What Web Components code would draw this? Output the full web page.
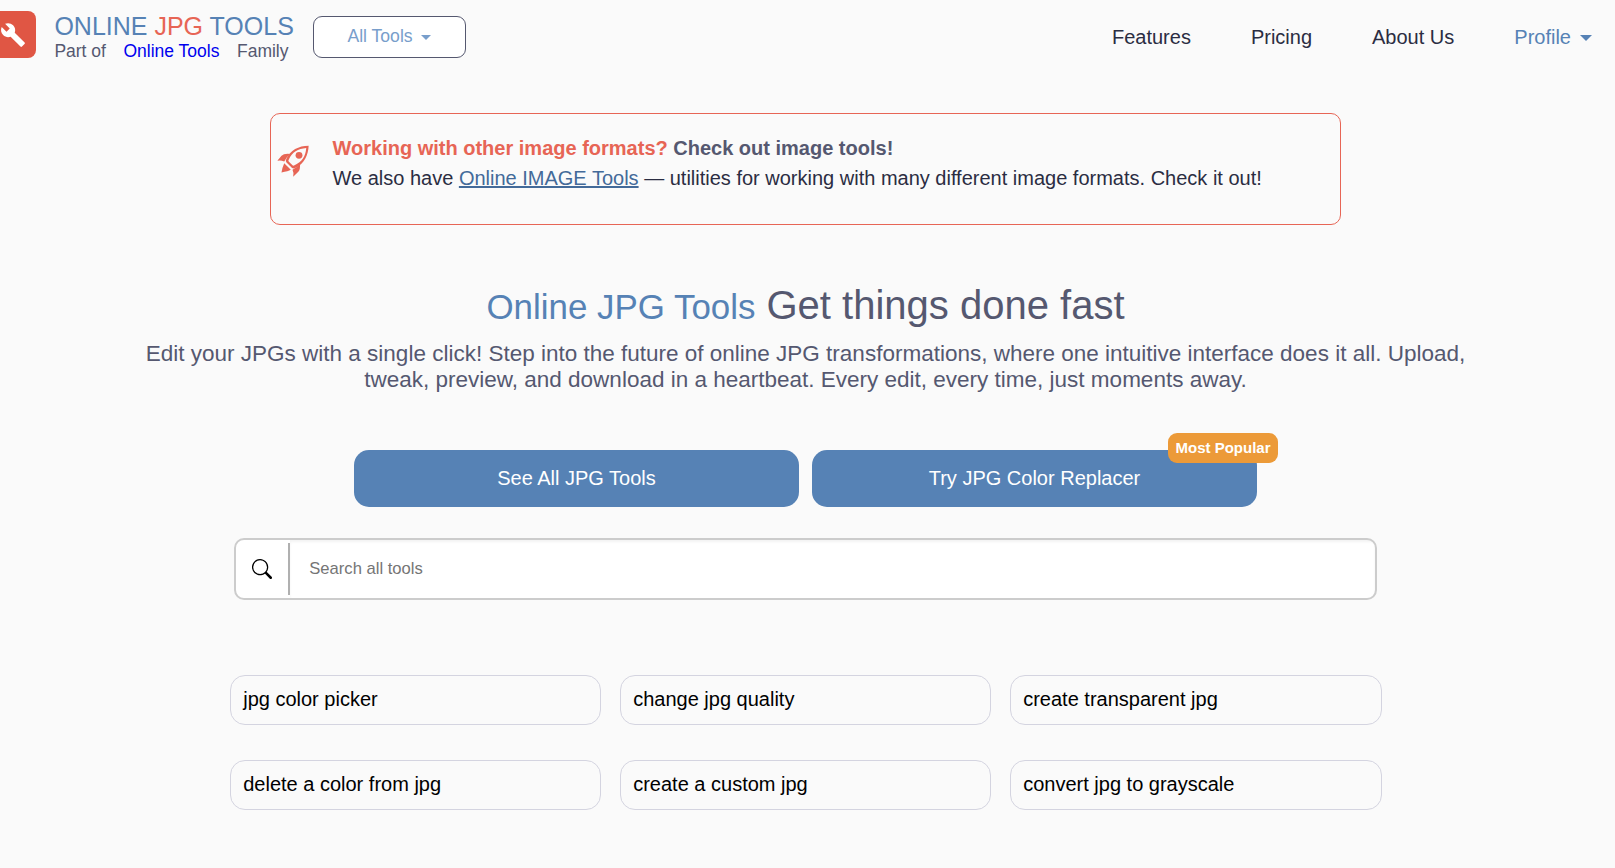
<!DOCTYPE html>
<html lang="en">
<head>
<meta charset="utf-8">
<title>Online JPG Tools</title>
<style>
html,body{margin:0;height:100%;background:#fafafa}
body{font-family:"Liberation Sans",Arial,sans-serif;font-size:20px;line-height:24px;color:#2b2d42;overflow:hidden}
</style>
</head>
<body>
<jpg-page></jpg-page>
<script>
function define(name, html) {
  const t = document.createElement('template');
  t.innerHTML = html;
  customElements.define(name, class extends HTMLElement {
    constructor() {
      super();
      this.attachShadow({mode: 'open'}).appendChild(t.content.cloneNode(true));
    }
  });
}

define('caret-down', `<style>
:host{display:block;width:0;height:0;border:6px solid transparent;border-top-color:currentColor;border-bottom:0}
:host([small]){border-width:5px 5px 0}
</style>`);

define('site-logo', `<style>
:host{display:flex;height:47px}
.mark{width:36px;height:47px;background:#e05644;border-radius:0 8px 8px 0;flex:none;display:flex;align-items:center}
svg{display:block;width:26px;height:26px;fill:#fff}
.words{margin-left:18.4px;padding-top:1px}
.name{font-size:25px;line-height:28px;color:#5682b5;white-space:nowrap}
.name b{font-weight:400;color:#e76555}
.fam{font-size:17.5px;line-height:23px;color:#555870;display:flex;gap:17.5px;white-space:nowrap}
a{color:#00e;text-decoration:none}
</style>
<div class="mark"><svg viewBox="0 0 24 24"><path d="M22.7 19l-9.1-9.1c.9-2.3.4-5-1.5-6.9-2-2-5-2.4-7.4-1.3L9 6 6 9 1.6 4.7C.4 7.1.9 10.1 2.9 12.1c1.9 1.9 4.6 2.4 6.9 1.5l9.1 9.1c.4.4 1 .4 1.4 0l2.3-2.3c.5-.4.5-1.1.1-1.4z"/></svg></div>
<div class="words"><div class="name">ONLINE <b>JPG</b> TOOLS</div>
<div class="fam"><span>Part of</span><a>Online Tools</a><span>Family</span></div></div>`);

define('all-tools', `<style>
:host{display:flex;box-sizing:border-box;width:153px;height:42px;border:1px solid #55586f;border-radius:9px;background:#fff;color:#789ecb;font-size:17.6px;line-height:38px;padding-left:33.4px;gap:8.6px;white-space:nowrap}
caret-down{margin-top:18px}
</style><span><slot></slot></span><caret-down small></caret-down>`);

define('top-bar', `<style>
:host{display:flex;height:70px;padding-top:11px;box-sizing:border-box;padding-right:23px}
all-tools{margin:5px 0 0 20px}
nav{margin-left:auto;display:flex;gap:60px;line-height:24px;padding-top:14px}
.profile{display:flex;gap:9px;color:#5682b5}
caret-down{margin-top:10px}
site-logo{width:293px}
</style>
<site-logo></site-logo><all-tools>All Tools</all-tools>
<nav><span>Features</span><span>Pricing</span><span>About Us</span><span class="profile">Profile<caret-down></caret-down></span></nav>`);

define('promo-banner', `<style>
:host{display:flex;box-sizing:border-box;width:1071px;height:112px;border:1px solid #e76555;border-radius:10px;padding:19px 0 0 6.5px;line-height:30px;white-space:nowrap}
svg{width:32px;height:33px;margin:12px 23.5px 0 -.5px;flex:none}
b{color:#555870}b i{font-style:normal;color:#e76555}
a{color:#436a99;text-decoration:underline}
</style>
<svg viewBox="53 136 93 96" fill="#e76555"><path fill-rule="evenodd" d="M145 138C144 165 132 190 107 202Q101 206 96 202L80 186Q77 182 80 177C91 151 116 138 145 138ZM138 145C114 147 97 157 87 179Q85 182 87 184L98 195Q100 197 104 195C126 185 136 169 138 145Z"/><circle cx="117" cy="166" r="10"/><path d="M92 162Q73 160 66 167L54 182Q63 179 74 184Q80 170 92 162ZM120 189Q121 208 115 214L100 228Q103 218 98 208Q111 202 120 189ZM74 189L93 208Q86 212 66 216Q68 202 74 189Z"/></svg>
<div><b><i>Working with other image formats?</i> Check out image tools!</b><br>We also have <a>Online IMAGE Tools</a> — utilities for working with many different image formats. Check it out!</div>`);

define('hero-text', `<style>
:host{display:block;text-align:center;color:#555870}
h1{margin:0;font-weight:400;font-size:40px;line-height:48px}
h1 span{font-size:34.9px;color:#5682b5}
p{margin:10px 0 0;font-size:22.5px;line-height:26px;white-space:nowrap}
</style>
<h1><span>Online JPG Tools</span> Get things done fast</h1>
<p>Edit your JPGs with a single click! Step into the future of online JPG transformations, where one intuitive interface does it all. Upload,<br>tweak, preview, and download in a heartbeat. Every edit, every time, just moments away.</p>`);

define('action-button', `<style>
:host{display:block;position:relative;width:445px;height:57px;border-radius:15px;background:#5682b5;color:#fff;text-align:center;line-height:56px}
::slotted([slot=badge]){position:absolute;right:-21px;top:-17px;height:30px;width:110px;line-height:30px;font-size:15px;font-weight:700;background:#ec9a38;border-radius:9px}
</style><slot></slot><slot name="badge"></slot>`);

define('search-box', `<style>
:host{display:flex;box-sizing:border-box;width:1143px;height:62px;border:2px solid #ccc;border-radius:10px;background:#fff;overflow:hidden}
.icon{width:52px;padding-left:16px;box-sizing:border-box;display:flex;align-items:center;flex:none}
svg{width:20px;height:20px}
.rule{width:2px;height:52px;background:#b0b0b0;margin-top:3px}
.field{flex:1;padding-left:19.3px;color:#757575;font-size:16.6px;line-height:57px;box-shadow:inset 0 2px 3px rgba(0,0,0,.05)}
</style>
<div class="icon"><svg viewBox="0 0 16 16"><path d="M11.742 10.344a6.5 6.5 0 1 0-1.397 1.398h-.001q.044.06.098.115l3.85 3.85a1 1 0 0 0 1.415-1.414l-3.85-3.85a1 1 0 0 0-.115-.1zM12 6.5a5.5 5.5 0 1 1-11 0 5.5 5.5 0 0 1 11 0"/></svg></div><div class="rule"></div><div class="field">Search all tools</div>`);

define('tool-chip', `<style>
:host{display:block;box-sizing:border-box;height:50px;border:1px solid #d4d4e0;border-radius:15px;padding-left:12.2px;line-height:46px;color:#000}
</style><slot></slot>`);

define('jpg-page', `<style>
:host{display:flex;flex-direction:column}
promo-banner{margin:43px 0 0 270px}
hero-text{margin:56px 0 0;padding-right:4px}
.actions{display:flex;gap:13px;margin:57px 0 0 354px}
search-box{margin:31px 0 0 234px}
.grid{display:grid;grid-template-columns:371px 371px 372px;column-gap:19px;row-gap:35px;margin:75px 0 0 230px}
</style>
<top-bar></top-bar>
<promo-banner></promo-banner>
<hero-text></hero-text>
<div class="actions"><action-button>See All JPG Tools</action-button><action-button>Try JPG Color Replacer<span slot="badge">Most Popular</span></action-button></div>
<search-box></search-box>
<div class="grid"><tool-chip>jpg color picker</tool-chip><tool-chip>change jpg quality</tool-chip><tool-chip>create transparent jpg</tool-chip><tool-chip>delete a color from jpg</tool-chip><tool-chip>create a custom jpg</tool-chip><tool-chip>convert jpg to grayscale</tool-chip></div>`);
</script>
</body>
</html>
